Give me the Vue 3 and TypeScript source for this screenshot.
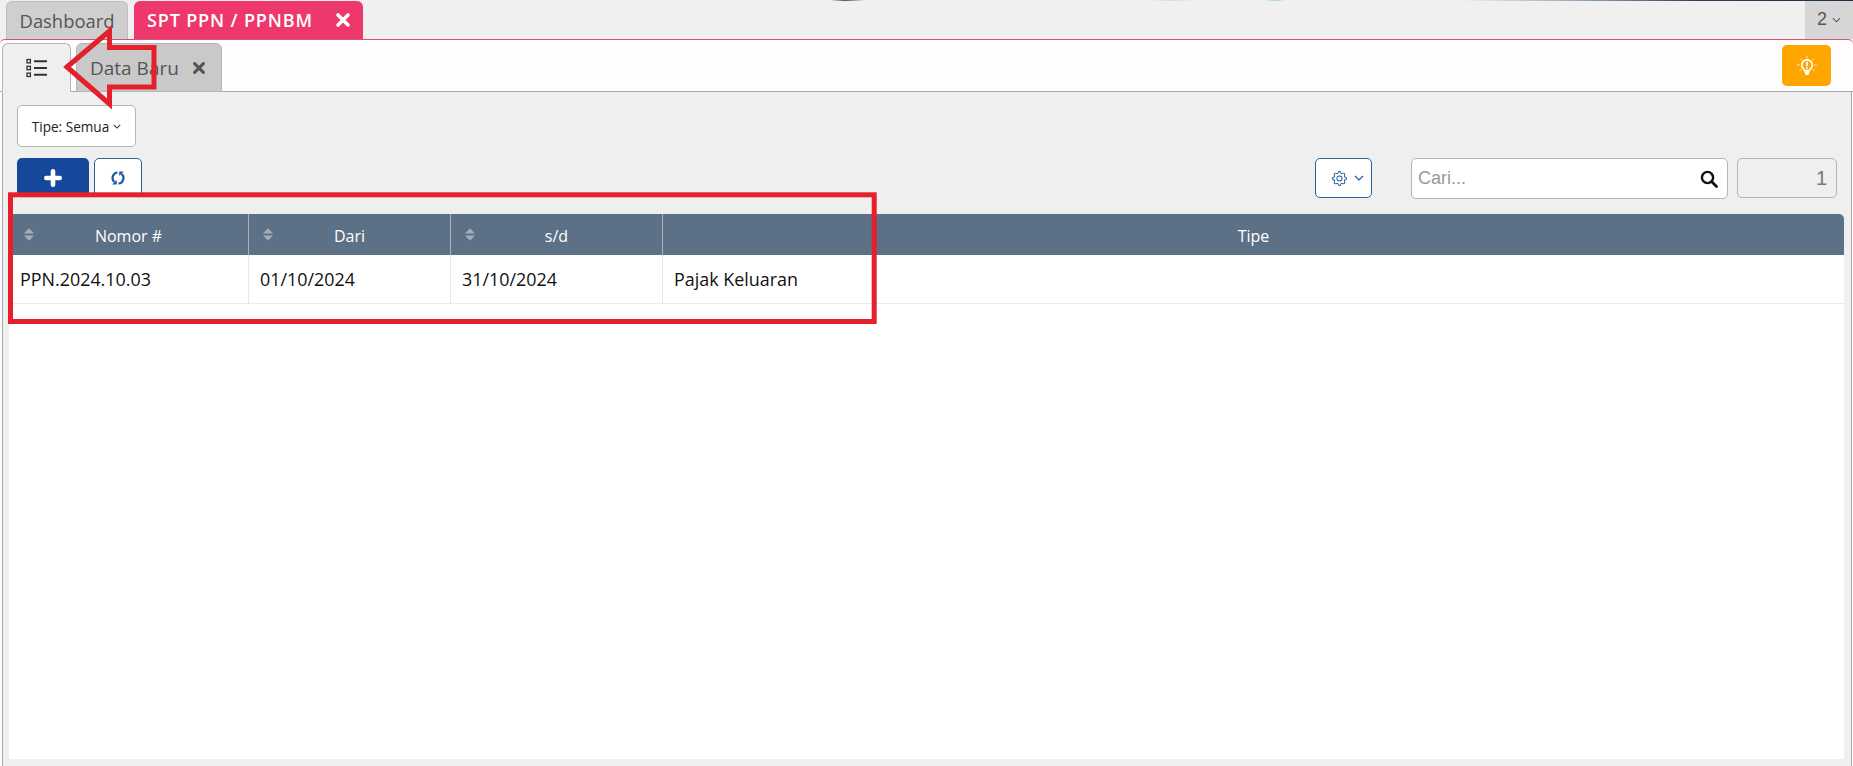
<script setup lang="ts">
interface Col { label: string; width: string; sortable: boolean; value: string }
const cols: Col[] = [
  { label: 'Nomor #', width: '240px', sortable: true, value: 'PPN.2024.10.03' },
  { label: 'Dari', width: '202px', sortable: true, value: '01/10/2024' },
  { label: 's/d', width: '212px', sortable: true, value: '31/10/2024' },
  { label: 'Tipe', width: '1fr', sortable: false, value: 'Pajak Keluaran' },
]
const gridColumns = cols.map((c) => c.width).join(' ')
</script>

<template>
  <div class="page">
    <div class="top-strip"></div>
    <nav class="main-tabs">
      <div class="main-tab plain">Dashboard</div>
      <div class="main-tab active">
        <span>SPT PPN / PPNBM</span>
        <svg class="x" viewBox="0 0 16 16" width="16" height="16"><path d="M3 3l10 10M13 3L3 13" stroke="currentColor" stroke-width="3.6" stroke-linecap="round" /></svg>
      </div>
      <div class="spacer"></div>
      <div class="tab-count">
        <span>2</span>
        <svg viewBox="0 0 10 6" width="9" height="6"><path d="M1 1l4 4 4-4" fill="none" stroke="currentColor" stroke-width="1.2" /></svg>
      </div>
    </nav>

    <section class="panel">
      <div class="sub-tabs">
        <div class="sub-tab list">
          <svg viewBox="0 0 22 20" width="22" height="20" fill="none" stroke="#333">
            <rect x="1" y="1.5" width="3.4" height="3.4" stroke-width="1.3" />
            <rect x="1" y="8.3" width="3.4" height="3.4" stroke-width="1.3" />
            <rect x="1" y="15.1" width="3.4" height="3.4" stroke-width="1.3" />
            <path d="M8 3.200h13M8 10h13M8 16.800h13" stroke-width="2" />
          </svg>
        </div>
        <div class="sub-tab closable">
          <span>Data Baru</span>
          <svg viewBox="0 0 16 16" width="14" height="14"><path d="M3 3l10 10M13 3L3 13" stroke="#555" stroke-width="3.6" stroke-linecap="round" /></svg>
        </div>
        <div class="spacer"></div>
        <button class="hint" type="button">
          <svg viewBox="0 0 20 20" width="20" height="20">
            <path d="M10 3.900a5.200 5.200 0 0 0-3.300 9.200c.6.500.8 1 .9 1.500h4.800c.1-.5.300-1 .9-1.500A5.200 5.200 0 0 0 10 3.900z" fill="none" stroke="#fff" stroke-width="1.6" />
            <path d="M7.600 15.200h4.800v1.800l-1.200 2H8.800l-1.200-2z" fill="#fff" />
            <path d="M10 6v4.200M10 11.300v1.500" stroke="#fff" stroke-width="1.700" />
            <path d="M10 .4v2M3.300 2.800l1.300 1.300M16.700 2.800l-1.300 1.300M.4 9h2.200M17.400 9h2.200M2.600 14.800l1.600-1.100M17.400 14.800l-1.600-1.100" stroke="#fff" stroke-width=".9" />
          </svg>
        </button>
      </div>

      <div class="content">
        <div class="filter-row">
          <button class="filter" type="button">
            Tipe: Semua
            <svg viewBox="0 0 10 6" width="8" height="5"><path d="M1 1l4 4 4-4" fill="none" stroke="#333" stroke-width="1.3" /></svg>
          </button>
        </div>

        <div class="toolbar">
          <button class="add" type="button">
            <svg viewBox="0 0 18 18" width="18" height="18"><path d="M9 2.300v13.400M2.300 9h13.400" stroke="#fff" stroke-width="4.600" stroke-linecap="round" /></svg>
          </button>
          <button class="refresh" type="button">
            <svg viewBox="0 0 16 16" width="16" height="16" fill="none" stroke="#1c5a9c" stroke-width="2.200">
              <path d="M7.500 2.500A5.500 5.500 0 0 0 4.300 12" />
              <path d="M8.500 13.500A5.500 5.500 0 0 0 11.700 4" />
              <path d="M2.200 14.600h4.600V10z" fill="#1c5a9c" stroke="none" />
              <path d="M13.800 1.400H9.200V6z" fill="#1c5a9c" stroke="none" />
            </svg>
          </button>
          <div class="spacer"></div>
          <button class="settings" type="button">
            <svg viewBox="0 0 16 16" width="15" height="15" fill="#1c5a9c">
              <path d="M8 4.754a3.246 3.246 0 1 0 0 6.492 3.246 3.246 0 0 0 0-6.492zM5.754 8a2.246 2.246 0 1 1 4.492 0 2.246 2.246 0 0 1-4.492 0z" />
              <path d="M9.796 1.343c-.527-1.790-3.065-1.790-3.592 0l-.094.319a.873.873 0 0 1-1.255.520l-.292-.160c-1.640-.892-3.433.902-2.540 2.541l.159.292a.873.873 0 0 1-.520 1.255l-.319.094c-1.790.527-1.790 3.065 0 3.592l.319.094a.873.873 0 0 1 .520 1.255l-.160.292c-.892 1.640.901 3.434 2.541 2.540l.292-.159a.873.873 0 0 1 1.255.520l.094.319c.527 1.790 3.065 1.790 3.592 0l.094-.319a.873.873 0 0 1 1.255-.520l.292.160c1.640.893 3.434-.902 2.540-2.541l-.159-.292a.873.873 0 0 1 .520-1.255l.319-.094c1.790-.527 1.790-3.065 0-3.592l-.319-.094a.873.873 0 0 1-.520-1.255l.160-.292c.893-1.640-.902-3.433-2.541-2.540l-.292.159a.873.873 0 0 1-1.255-.520l-.094-.319zm-2.633.283c.246-.835 1.428-.835 1.674 0l.094.319a1.873 1.873 0 0 0 2.693 1.115l.291-.160c.764-.415 1.600.420 1.184 1.185l-.159.292a1.873 1.873 0 0 0 1.116 2.692l.318.094c.835.246.835 1.428 0 1.674l-.319.094a1.873 1.873 0 0 0-1.115 2.693l.160.291c.415.764-.420 1.600-1.185 1.184l-.291-.159a1.873 1.873 0 0 0-2.693 1.116l-.094.318c-.246.835-1.428.835-1.674 0l-.094-.319a1.873 1.873 0 0 0-2.692-1.115l-.292.160c-.764.415-1.600-.420-1.184-1.185l.159-.291A1.873 1.873 0 0 0 1.945 8.930l-.319-.094c-.835-.246-.835-1.428 0-1.674l.319-.094A1.873 1.873 0 0 0 3.060 4.377l-.160-.292c-.415-.764.420-1.600 1.185-1.184l.292.159a1.873 1.873 0 0 0 2.692-1.115l.094-.319z" />
            </svg>
            <svg viewBox="0 0 10 6" width="10" height="6"><path d="M1 1l4 4 4-4" fill="none" stroke="#1c5a9c" stroke-width="1.2" /></svg>
          </button>
          <label class="search">
            <input type="text" placeholder="Cari..." />
            <svg viewBox="0 0 18 18" width="18" height="18" fill="none" stroke="#111" stroke-width="2.400">
              <circle cx="7.500" cy="7.500" r="5.600" />
              <path d="M11.800 11.800l4.700 4.700" stroke-linecap="round" stroke-width="2.800" />
            </svg>
          </label>
          <div class="page-box">1</div>
        </div>

        <div class="table">
          <div class="thead" :style="{ gridTemplateColumns: gridColumns }">
            <div v-for="c in cols" :key="c.label" class="th">
              <svg v-if="c.sortable" class="sort" viewBox="0 0 10 13" width="10" height="13">
                <path d="M5 .3L10 5.600H0z" fill="#a9adb3" />
                <path d="M5 12.700L10 7.400H0z" fill="#a9adb3" />
              </svg>
              <span>{{ c.label }}</span>
            </div>
          </div>
          <div class="tr" :style="{ gridTemplateColumns: gridColumns }">
            <div v-for="c in cols" :key="c.label" class="td">{{ c.value }}</div>
          </div>
        </div>
      </div>
    </section>

    <svg class="annotations" width="1853" height="766" viewBox="0 0 1853 766" fill="none" stroke="#e4202c" stroke-width="5">
      <rect x="10.500" y="194.800" width="863.700" height="126.700" />
      <path d="M67 67L109.500 31V47.500H154V87H109.500V104Z" stroke-linejoin="miter" />
    </svg>
  </div>
</template>

<style>
html, body { margin: 0; padding: 0; background: #f0f0f0; }
</style>

<style scoped>
.page {
  position: relative;
  width: 1853px;
  height: 766px;
  overflow: hidden;
  display: flex;
  flex-direction: column;
  background: #f0f0f0;
  font-family: "Open Sans", "Noto Sans", sans-serif;
  color: #111;
}
.top-strip {
  position: absolute;
  left: 0;
  top: 0;
  width: 100%;
  height: 1px;
  background: linear-gradient(90deg, transparent 0 830px, #555 845px, transparent 865px, transparent 1150px, #eecfd8 1170px, transparent 1195px, transparent 1265px, #9fd2e8 1275px, transparent 1285px, transparent 1460px, #8fa6bd 1580px, #2c3e55 1700px, #1f2f45 1853px);
}
.spacer { flex: 1; }
.main-tabs {
  flex: none;
  height: 39px;
  display: flex;
  align-items: flex-end;
  padding-left: 6px;
  gap: 6px;
  box-sizing: border-box;
}
.main-tab {
  height: 38px;
  box-sizing: border-box;
  border-radius: 6px 6px 0 0;
  display: flex;
  align-items: center;
}
.main-tab.plain {
  width: 122px;
  justify-content: center;
  background: #cfcfcf;
  border: 1px solid #bdbdbd;
  border-bottom: 0;
  color: #555;
  font-size: 18.400px;
}
.main-tab.active {
  width: 229px;
  padding: 0 12px 0 13px;
  justify-content: space-between;
  background: #ee386c;
  color: #fff;
  font-weight: 600;
  font-size: 18px;
  letter-spacing: .85px;
}
.tab-count {
  align-self: stretch;
  width: 48px;
  background: #d6d6d6;
  display: flex;
  align-items: center;
  justify-content: center;
  gap: 5px;
  font: 18px "Liberation Sans", Arial, sans-serif;
  color: #555;
}
.panel {
  flex: 1;
  display: flex;
  flex-direction: column;
  min-height: 0;
  border-top: 1px solid #d8517c;
  border-radius: 5px 5px 0 0;
  background: #fdfdfd;
}
.sub-tabs {
  flex: none;
  height: 52px;
  box-sizing: border-box;
  display: flex;
  align-items: flex-end;
  gap: 5px;
  padding: 0 22px 0 2px;
  border-bottom: 1px solid #aaa;
}
.sub-tab {
  height: 49px;
  margin-bottom: -1px;
  box-sizing: border-box;
  border: 1px solid #b5b5b5;
  border-radius: 6px 6px 0 0;
  display: flex;
  align-items: center;
}
.sub-tab.list {
  width: 69px;
  justify-content: center;
  background: #efefef;
  border-bottom-color: #efefef;
  position: relative;
  z-index: 1;
}
.sub-tab.closable {
  width: 146px;
  padding-left: 13px;
  gap: 13px;
  background: #c9c9c9;
  font-size: 19px;
  color: #555;
}
.hint {
  align-self: center;
  width: 49px;
  height: 41px;
  padding: 0;
  border: 0;
  border-radius: 5px;
  background: #ffa500;
  display: flex;
  align-items: center;
  justify-content: center;
}
.content {
  flex: 1;
  min-height: 0;
  margin: 0 1px 0 2px;
  padding: 13px 7px 7px 6px;
  background: #efefef;
  border-left: 1px solid #aaa;
  border-right: 1px solid #aaa;
  display: flex;
  flex-direction: column;
}
.filter-row { flex: none; padding-left: 8px; height: 42px; }
.filter {
  width: 119px;
  height: 42px;
  padding: 0;
  border: 1px solid #b5b5b5;
  border-radius: 5px;
  background: #fff;
  display: flex;
  align-items: center;
  justify-content: center;
  gap: 4px;
  font: 13.600px "Open Sans", "Noto Sans", sans-serif;
  color: #222;
}
.toolbar {
  flex: none;
  display: flex;
  align-items: flex-start;
  height: 41px;
  margin-top: 11px;
  padding: 0 7px 0 8px;
}
.add {
  width: 72px;
  height: 39px;
  padding: 0;
  border: 0;
  border-radius: 5px;
  background: #15489b;
  display: flex;
  align-items: center;
  justify-content: center;
}
.refresh {
  width: 48px;
  height: 39px;
  margin-left: 5px;
  padding: 0;
  border: 1px solid #2a6496;
  border-radius: 5px;
  background: #fff;
  display: flex;
  align-items: center;
  justify-content: center;
}
.settings {
  width: 57px;
  height: 40px;
  padding: 0 0 0 16px;
  border: 1px solid #2a6496;
  border-radius: 5px;
  background: #fff;
  display: flex;
  align-items: center;
  justify-content: flex-start;
  gap: 7px;
}
.search {
  width: 317px;
  height: 41px;
  margin-left: 39px;
  box-sizing: border-box;
  border: 1px solid #b5b5b5;
  border-radius: 5px;
  background: #fff;
  display: flex;
  align-items: center;
  padding: 0 9px 0 6px;
}
.search input {
  flex: 1;
  min-width: 0;
  border: 0;
  outline: 0;
  padding: 0;
  background: transparent;
  font: 18px "Liberation Sans", Arial, sans-serif;
}
.search input::placeholder { color: #9a9a9a; opacity: 1; }
.page-box {
  width: 100px;
  height: 40px;
  margin-left: 9px;
  box-sizing: border-box;
  border: 1px solid #b5b5b5;
  border-radius: 5px;
  background: #efefef;
  display: flex;
  align-items: center;
  justify-content: flex-end;
  padding-right: 9px;
  font: 20px "Liberation Sans", Arial, sans-serif;
  color: #777;
}
.table {
  flex: 1;
  min-height: 0;
  margin-top: 15px;
  background: #fff;
  border-radius: 5px 5px 0 0;
  overflow: hidden;
}
.thead {
  display: grid;
  height: 41px;
  background: #5c7086;
  color: #fff;
  font-size: 16px;
}
.th {
  position: relative;
  display: flex;
  align-items: center;
  justify-content: center;
  padding-top: 2px;
  box-sizing: border-box;
  border-right: 1px solid #a7b1bc;
}
.th:last-child { border-right: 0; }
.sort { position: absolute; left: 14px; top: 14px; }
.th:first-child .sort { left: 15px; }
.tr {
  display: grid;
  height: 49px;
  box-sizing: border-box;
  border-bottom: 1px solid #eaeaea;
  font-size: 17.900px;
}
.td {
  display: flex;
  align-items: center;
  padding: 0 0 0 11px;
  border-right: 1px dotted #d4d4d4;
}
.td:last-child { border-right: 0; }
.annotations {
  position: absolute;
  left: 0;
  top: 0;
  z-index: 2;
  pointer-events: none;
}
</style>
